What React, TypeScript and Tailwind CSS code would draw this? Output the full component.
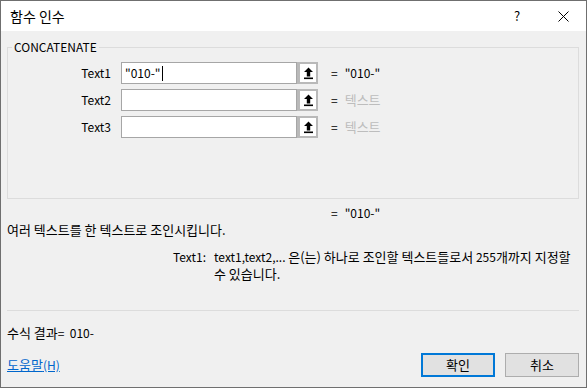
import * as React from 'react';

const font = { fontFamily: '"Noto Sans CJK KR", "Noto Sans", sans-serif' };

// Hangul runs are set a touch larger so they take the width of the original glyphs
function K({ children }: { children: React.ReactNode }) {
  return <span className="text-[13px]">{children}</span>;
}

function CollapseIcon() {
  return (
    <svg width="11" height="13" viewBox="0 0 11 13" fill="none">
      <path d="M5.5 0.5 L10 5 L7.2 5 L7.2 9.5 L3.8 9.5 L3.8 5 L1 5 Z" fill="#000" />
      <rect x="1" y="10.5" width="9" height="1.6" fill="#000" />
    </svg>
  );
}

function ArgRow({ label, value, filled }: { label: string; value?: string; filled?: boolean }) {
  return (
    <div className="flex h-[22px] items-center">
      <div className="w-[103px] text-right">{label}</div>
      <div className="ml-[10px] flex h-[22px] w-[176px] items-center border border-[#a6a6a6] bg-white pl-[3px]">
        {filled && (
          <>
            <span>{value}</span>
            <span className="ml-px inline-block h-[15px] w-px bg-black" />
          </>
        )}
      </div>
      <div className="flex h-[22px] w-[21px] items-center justify-center border-2 border-l-[3px] border-[#b9b9b9] bg-white">
        <CollapseIcon />
      </div>
      <span className="ml-[13px]">=</span>
      {filled ? (
        <span className="ml-[7px]">{value}</span>
      ) : (
        <span className="ml-[7px] text-[13px] text-[#bdbdbd]">텍스트</span>
      )}
    </div>
  );
}

export default function App() {
  return (
    <div
      className="flex h-[388px] w-[587px] flex-col border border-[#6f6f6f] bg-[#f0f0f0] text-[12px] text-black"
      style={font}
    >
      <div className="flex h-[30px] items-center justify-between bg-white pl-[9px]">
        <span className="text-[14px]">함수 인수</span>
        <div className="flex h-full items-center">
          <div className="flex w-[46px] justify-center text-[13px]">?</div>
          <div className="flex w-[46px] justify-center">
            <svg width="11" height="11" viewBox="0 0 11 11">
              <path d="M0.5 0.5 L10.5 10.5 M10.5 0.5 L0.5 10.5" stroke="#000" strokeWidth="1" />
            </svg>
          </div>
        </div>
      </div>

      <div className="flex flex-1 flex-col pl-[6px] pr-[7px]">
        <fieldset className="mt-[9px] h-[159px] border border-[#dcdcdc] pt-[8px]">
          <legend className="ml-[4px] px-[2px] leading-[14px]">CONCATENATE</legend>
          <div className="flex flex-col gap-[5px]">
            <ArgRow label="Text1" value={'"010-"'} filled />
            <ArgRow label="Text2" />
            <ArgRow label="Text3" />
          </div>
        </fieldset>

        <div className="mt-[6px] flex h-[16px] items-center pl-[324px] leading-[16px]">
          <span>=</span>
          <span className="ml-[7px]">"010-"</span>
        </div>

        <div className="mt-px leading-[16px]">
          <K>여러 텍스트를 한 텍스트로 조인시킵니다.</K>
        </div>

        <div className="mt-[10px] flex leading-[17px]">
          <div className="w-[207px] shrink-0 pl-[166px]">Text1:</div>
          <div>
            text1,text2,... <K>은(는) 하나로 조인할 텍스트들로서</K> 255<K>개까지 지정할 수 있습니다.</K>
          </div>
        </div>

        <div className="mt-auto h-px bg-[#dcdcdc]" />

        <div className="mt-[14px] leading-[16px]">
          <K>수식 결과</K>=&nbsp;&nbsp;010-
        </div>

        <div className="mb-[10px] mt-[12px] flex items-center justify-between">
          <a className="text-[13px] text-[#0066cc] underline" href="#">
            도움말<span className="text-[12px]">(H)</span>
          </a>
          <div className="flex gap-[10px]">
            <button className="h-[24px] w-[74px] border-2 border-[#0078d7] bg-[#e1e1e1] text-[13px]">확인</button>
            <button className="h-[24px] w-[74px] border border-[#adadad] bg-[#e1e1e1] text-[13px]">취소</button>
          </div>
        </div>
      </div>
    </div>
  );
}
